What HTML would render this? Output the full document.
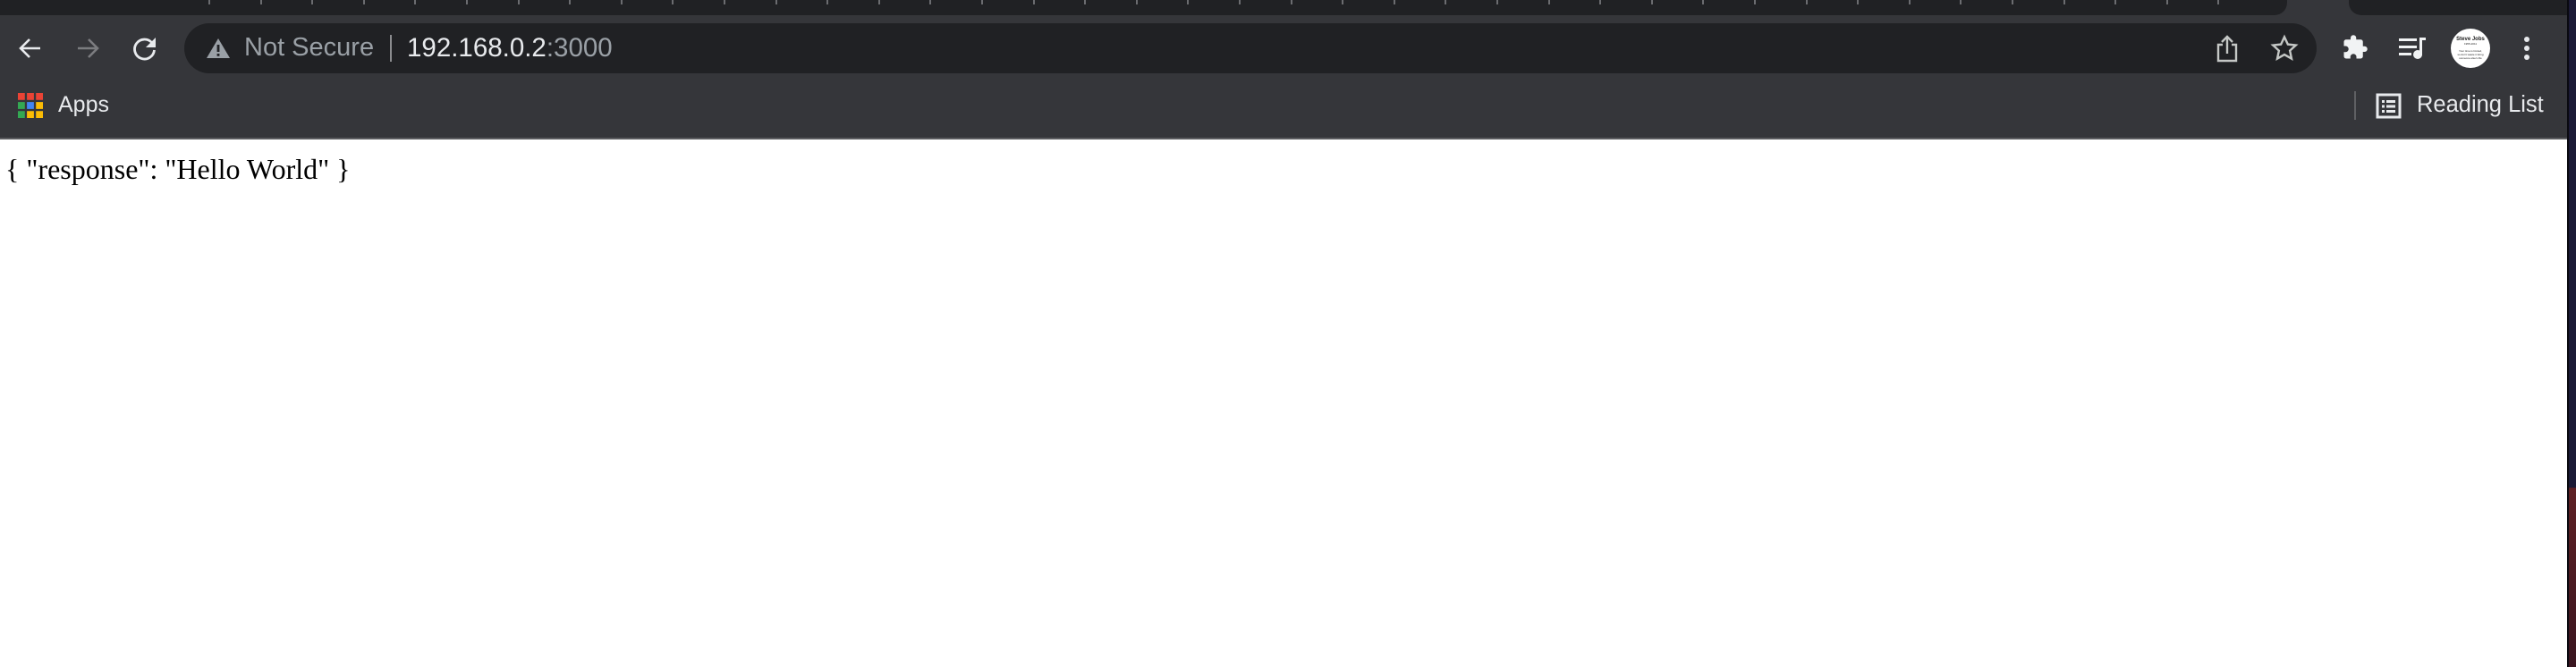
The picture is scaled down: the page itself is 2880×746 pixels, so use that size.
<!DOCTYPE html>
<html><head><style>
html,body{margin:0;padding:0;width:2880px;height:746px;overflow:hidden;background:#1b1a35;}
#side{position:absolute;left:2870px;top:0;width:10px;height:746px;background:linear-gradient(#1b1a36 0,#1b1a36 545px,#5e2024 546px,#3a1520 746px);border-left:2px solid #0a0a10;}
#tabs{position:absolute;left:0;top:0;width:2870px;height:17px;background:#35363a;}
#t1{position:absolute;left:0;top:0;width:2557px;height:17px;background:#202124;border-bottom-right-radius:14px;}
#t2{position:absolute;left:2626px;top:0;width:244px;height:17px;background:#202124;border-bottom-left-radius:14px;}
.tick{position:absolute;top:0;width:2px;height:5px;background:#6b6c70;}
#bar{position:absolute;left:0;top:17px;width:2870px;height:137px;background:#35363a;}
#line{position:absolute;left:0;top:154px;width:2870px;height:2px;background:#5c5d60;}
#page{position:absolute;left:0;top:156px;width:2870px;height:590px;background:#fff;}
#omni{position:absolute;left:206px;top:26px;width:2384px;height:56px;border-radius:28px;background:#202124;}
.t{position:absolute;font-family:"Liberation Sans",sans-serif;white-space:nowrap;}
svg{position:absolute;}
</style></head><body>
<div id="side"></div>
<div id="tabs"><div id="t1"></div><div id="t2"></div></div>
<div id="bar"></div>
<div id="line"></div>
<div id="page"><div style="position:absolute;left:6px;top:15px;font-family:'Liberation Serif',serif;font-size:32px;color:#000;white-space:nowrap">{ "response": "Hello World" }</div></div>
<div id="omni"></div>
<div id="ticks"></div>
<script>
var h='';for(var x=233;x<2520;x+=57.6){h+='<div class="tick" style="left:'+Math.round(x)+'px"></div>';}
document.getElementById('ticks').innerHTML=h;
</script>
<svg style="left:20px;top:40px" width="28" height="28" viewBox="0 0 28 28"><path d="M25 14H4M13 4L3 14l10 10" stroke="#e8eaed" stroke-width="2.6" fill="none"/></svg>
<svg style="left:84px;top:40px" width="28" height="28" viewBox="0 0 28 28"><path d="M3 14h21M15 4l10 10-10 10" stroke="#7b7c7f" stroke-width="2.6" fill="none"/></svg>
<svg style="left:148px;top:40px" width="28" height="28" viewBox="0 0 28 28"><path d="M22 8A11 11 0 1 0 24.5 16" stroke="#e8eaed" stroke-width="2.8" fill="none"/><path d="M26 2v11H15z" fill="#e8eaed"/></svg>
<svg style="left:230px;top:42px" width="28" height="24" viewBox="0 0 28 24"><path d="M14 1L27 23H1z" fill="#9aa0a6"/><rect x="12.6" y="8" width="2.8" height="8" fill="#202124"/><rect x="12.6" y="18" width="2.8" height="2.8" fill="#202124"/></svg>
<div class="t" style="left:273px;top:37px;font-size:29px;color:#9aa0a6">Not Secure</div>
<div style="position:absolute;left:436px;top:39px;width:2px;height:30px;background:#8a8b8e"></div>
<div class="t" style="left:455px;top:37px;font-size:29.5px;color:#e8eaed">192.168.0.2<span style="color:#9aa0a6">:3000</span></div>
<svg style="left:2477px;top:38px" width="26" height="32" viewBox="0 0 26 32"><path d="M8 12H3v18h20V12h-5M13 22V3M7 9l6-6 6 6" stroke="#c4c7c5" stroke-width="2.4" fill="none"/></svg>
<svg style="left:2538px;top:38px" width="32" height="32" viewBox="0 0 24 24"><path d="M12 2.5l2.9 6.2 6.7.7-5 4.6 1.4 6.7L12 17.3l-6 3.4 1.4-6.7-5-4.6 6.7-.7z" stroke="#c4c7c5" stroke-width="1.8" fill="none"/></svg>
<svg style="left:2618px;top:38px" width="30" height="30" viewBox="0 0 24 24"><path d="M20.5 11H19V7a2 2 0 0 0-2-2h-4V3.5a2.5 2.5 0 0 0-5 0V5H4a2 2 0 0 0-2 2v3.8h1.5a2.7 2.7 0 0 1 0 5.4H2V20a2 2 0 0 0 2 2h3.8v-1.5a2.7 2.7 0 0 1 5.4 0V22H17a2 2 0 0 0 2-2v-4h1.5a2.5 2.5 0 0 0 0-5z" fill="#f1f3f4"/></svg>
<svg style="left:2680px;top:40px" width="34" height="28" viewBox="0 0 34 28"><rect x="2" y="3" width="20" height="3" fill="#f1f3f4"/><rect x="2" y="11" width="20" height="3" fill="#f1f3f4"/><rect x="2" y="19" width="14" height="3" fill="#f1f3f4"/><rect x="25" y="2" width="3" height="20" fill="#f1f3f4"/><rect x="25" y="2" width="7" height="3" fill="#f1f3f4"/><circle cx="23" cy="21" r="5" fill="#f1f3f4"/></svg>
<div style="position:absolute;left:2740px;top:32px;width:44px;height:44px;border-radius:50%;background:#fff;overflow:hidden;font-family:'Liberation Sans',sans-serif;text-align:center;color:#222"><div style="font-size:6px;font-weight:bold;margin-top:9px">Steve Jobs</div><div style="font-size:3px">1955-2011</div><div style="font-size:3px;margin-top:4px;line-height:4px">Your time is limited,<br>so don't waste it living<br>someone else's life</div></div>
<svg style="left:2818px;top:40px" width="14" height="30" viewBox="0 0 14 30"><circle cx="7" cy="4" r="3" fill="#e8eaed"/><circle cx="7" cy="14" r="3" fill="#e8eaed"/><circle cx="7" cy="24" r="3" fill="#e8eaed"/></svg>
<svg style="left:20px;top:104px" width="28" height="28" viewBox="0 0 18 18"><rect x="0" y="0" width="5" height="5" fill="#ea4335"/><rect x="6.5" y="0" width="5" height="5" fill="#ea4335"/><rect x="13" y="0" width="5" height="5" fill="#ea4335"/><rect x="0" y="6.5" width="5" height="5" fill="#34a853"/><rect x="6.5" y="6.5" width="5" height="5" fill="#4285f4"/><rect x="13" y="6.5" width="5" height="5" fill="#fbbc05"/><rect x="0" y="13" width="5" height="5" fill="#34a853"/><rect x="6.5" y="13" width="5" height="5" fill="#fbbc05"/><rect x="13" y="13" width="5" height="5" fill="#fbbc05"/></svg>
<div class="t" style="left:65px;top:103px;font-size:25px;color:#e8eaed">Apps</div>
<div style="position:absolute;left:2632px;top:102px;width:2px;height:32px;background:#5f6063"></div>
<svg style="left:2656px;top:104px" width="30" height="30" viewBox="0 0 30 30"><rect x="2" y="2" width="25" height="25" stroke="#e8eaed" stroke-width="3" fill="none"/><rect x="7" y="8" width="3" height="3" fill="#e8eaed"/><rect x="12" y="8" width="10" height="3" fill="#e8eaed"/><rect x="7" y="13.5" width="3" height="3" fill="#e8eaed"/><rect x="12" y="13.5" width="10" height="3" fill="#e8eaed"/><rect x="7" y="19" width="3" height="3" fill="#e8eaed"/><rect x="12" y="19" width="10" height="3" fill="#e8eaed"/></svg>
<div class="t" style="left:2702px;top:103px;font-size:25.5px;color:#e8eaed">Reading List</div>
</body></html>
